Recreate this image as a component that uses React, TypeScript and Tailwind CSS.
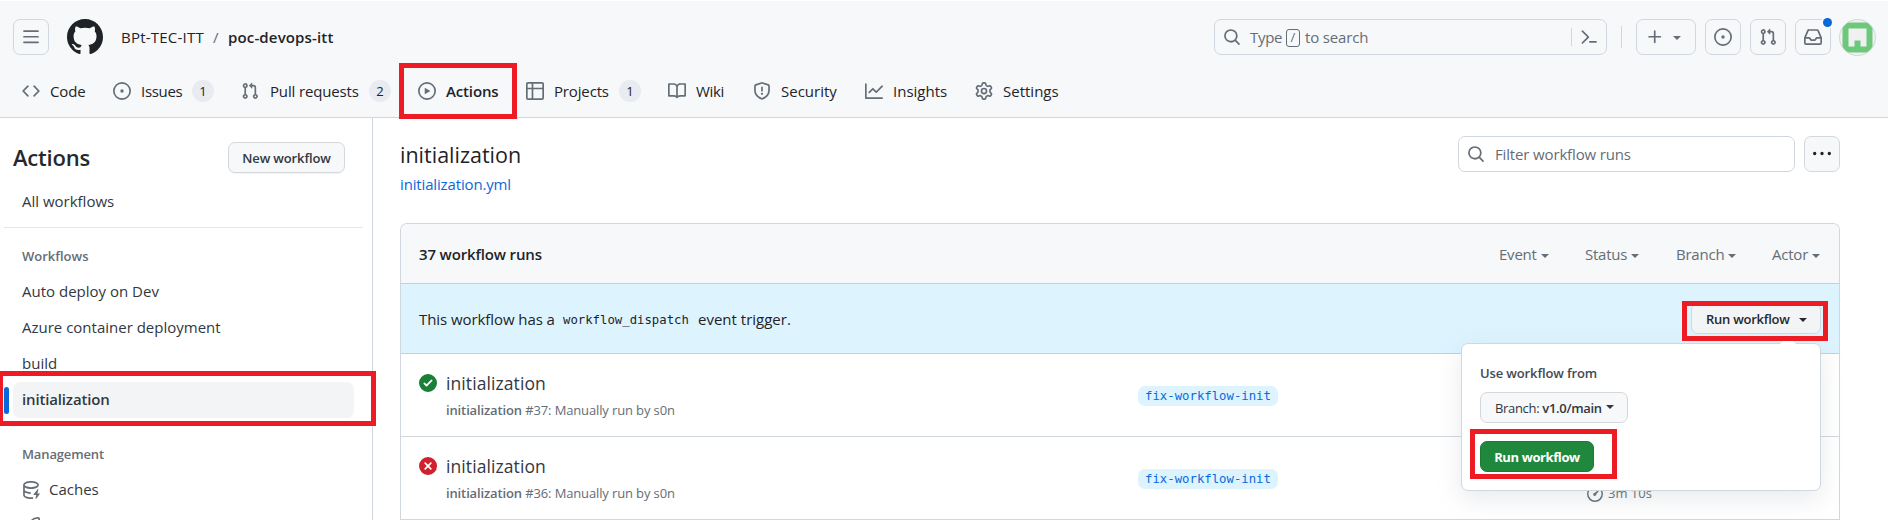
import React from "react";

const ICONS = {
  bars: "M1 2.75A.75.75 0 0 1 1.75 2h12.5a.75.75 0 0 1 0 1.5H1.75A.75.75 0 0 1 1 2.75Zm0 5A.75.75 0 0 1 1.75 7h12.5a.75.75 0 0 1 0 1.5H1.75A.75.75 0 0 1 1 7.75ZM1.75 12h12.5a.75.75 0 0 1 0 1.5H1.75a.75.75 0 0 1 0-1.5Z",
  github:
    "M8 0c4.42 0 8 3.58 8 8a8.013 8.013 0 0 1-5.45 7.59c-.4.08-.55-.17-.55-.38 0-.27.01-1.13.01-2.2 0-.75-.25-1.23-.54-1.48 1.78-.2 3.65-.88 3.65-3.95 0-.88-.31-1.59-.82-2.15.08-.2.36-1.02-.08-2.12 0 0-.67-.22-2.2.82-.64-.18-1.32-.27-2-.27-.68 0-1.36.09-2 .27-1.53-1.03-2.2-.82-2.2-.82-.44 1.1-.16 1.92-.08 2.12-.51.56-.82 1.28-.82 2.15 0 3.06 1.86 3.75 3.64 3.95-.23.2-.44.55-.51 1.07-.46.21-1.61.55-2.33-.66-.15-.24-.6-.83-1.23-.82-.67.01-.27.38.01.53.34.19.73.9.82 1.13.16.45.68 1.31 2.69.94 0 .67.01 1.3.01 1.49 0 .21-.15.45-.55.38A7.995 7.995 0 0 1 0 8c0-4.42 3.58-8 8-8Z",
  code: "m11.28 3.22 4.25 4.25a.75.75 0 0 1 0 1.06l-4.25 4.25a.749.749 0 0 1-1.275-.326.749.749 0 0 1 .215-.734L13.94 8l-3.72-3.72a.749.749 0 0 1 .326-1.275.749.749 0 0 1 .734.215Zm-6.56 0a.751.751 0 0 1 1.042.018.751.751 0 0 1 .018 1.042L2.06 8l3.72 3.72a.749.749 0 0 1-.326 1.275.749.749 0 0 1-.734-.215L.47 8.53a.75.75 0 0 1 0-1.06Z",
  issue:
    "M8 9.5a1.5 1.5 0 1 0 0-3 1.5 1.5 0 0 0 0 3ZM8 0a8 8 0 1 1 0 16A8 8 0 0 1 8 0ZM1.5 8a6.5 6.5 0 1 0 13 0 6.5 6.5 0 0 0-13 0Z",
  pull: "M1.5 3.25a2.25 2.25 0 1 1 3 2.122v5.256a2.251 2.251 0 1 1-1.5 0V5.372A2.25 2.25 0 0 1 1.5 3.25Zm5.677-.177L9.573.677A.25.25 0 0 1 10 .854V2.5h1A2.5 2.5 0 0 1 13.5 5v5.628a2.251 2.251 0 1 1-1.5 0V5a1 1 0 0 0-1-1h-1v1.646a.25.25 0 0 1-.427.177L7.177 3.427a.25.25 0 0 1 0-.354ZM3.75 2.5a.75.75 0 1 0 0 1.5.75.75 0 0 0 0-1.5Zm0 9.5a.75.75 0 1 0 0 1.5.75.75 0 0 0 0-1.5Zm8.25.75a.75.75 0 1 0 1.5 0 .75.75 0 0 0-1.5 0Z",
  play: "M8 0a8 8 0 1 1 0 16A8 8 0 0 1 8 0ZM1.5 8a6.5 6.5 0 1 0 13 0 6.5 6.5 0 0 0-13 0Zm4.879-2.773 4.264 2.559a.25.25 0 0 1 0 .428l-4.264 2.559A.25.25 0 0 1 6 10.559V5.442a.25.25 0 0 1 .379-.215Z",
  table:
    "M0 1.75C0 .784.784 0 1.75 0h12.5C15.216 0 16 .784 16 1.75v12.5A1.75 1.75 0 0 1 14.25 16H1.75A1.75 1.75 0 0 1 0 14.25ZM6.5 6.5v8h7.75a.25.25 0 0 0 .25-.25V6.5Zm8-1.5V1.75a.25.25 0 0 0-.25-.25H6.5V5Zm-13 1.5v7.75c0 .138.112.25.25.25H5v-8ZM5 5V1.5H1.75a.25.25 0 0 0-.25.25V5Z",
  book: "M0 1.75A.75.75 0 0 1 .75 1h4.253c1.227 0 2.317.59 3 1.501A3.743 3.743 0 0 1 11.006 1h4.245a.75.75 0 0 1 .75.75v10.5a.75.75 0 0 1-.75.75h-4.507a2.25 2.25 0 0 0-1.591.659l-.622.621a.75.75 0 0 1-1.06 0l-.622-.621A2.25 2.25 0 0 0 5.258 13H.75a.75.75 0 0 1-.75-.75Zm7.251 10.324.004-5.073-.002-2.253A2.25 2.25 0 0 0 5.003 2.5H1.5v9h3.757a3.75 3.75 0 0 1 1.994.574ZM8.755 4.75l-.004 7.322a3.752 3.752 0 0 1 1.992-.572H14.5v-9h-3.495a2.25 2.25 0 0 0-2.25 2.25Z",
  shield:
    "M7.467.133a1.748 1.748 0 0 1 1.066 0l5.25 1.68A1.75 1.75 0 0 1 15 3.48V7c0 1.566-.32 3.182-1.303 4.682-.983 1.498-2.585 2.813-5.032 3.855a1.697 1.697 0 0 1-1.33 0c-2.447-1.042-4.049-2.357-5.032-3.855C1.32 10.182 1 8.566 1 7V3.48a1.75 1.75 0 0 1 1.217-1.667Zm.61 1.429a.25.25 0 0 0-.153 0l-5.25 1.68a.25.25 0 0 0-.174.238V7c0 1.358.275 2.666 1.057 3.86.784 1.194 2.121 2.34 4.366 3.297a.196.196 0 0 0 .154 0c2.245-.956 3.582-2.104 4.366-3.298C13.225 9.666 13.5 8.36 13.5 7V3.48a.251.251 0 0 0-.174-.237l-5.25-1.68ZM8.75 4.75v3a.75.75 0 0 1-1.5 0v-3a.75.75 0 0 1 1.5 0ZM9 10.5a1 1 0 1 1-2 0 1 1 0 0 1 2 0Z",
  graph:
    "M1.5 1.75V13.5h13.75a.75.75 0 0 1 0 1.5H.75a.75.75 0 0 1-.75-.75V1.75a.75.75 0 0 1 1.5 0Zm14.28 2.53-5.25 5.25a.75.75 0 0 1-1.06 0L7 7.06 4.28 9.78a.751.751 0 0 1-1.042-.018.751.751 0 0 1-.018-1.042l3.25-3.25a.75.75 0 0 1 1.06 0L10 7.94l4.72-4.72a.751.751 0 0 1 1.042.018.751.751 0 0 1 .018 1.042Z",
  gear: "M8 0a8.2 8.2 0 0 1 .701.031C9.444.095 9.99.645 10.16 1.29l.288 1.107c.018.066.079.158.212.224.231.114.454.243.668.386.123.082.233.09.299.071l1.103-.303c.644-.176 1.392.021 1.82.63.27.385.506.792.704 1.218.315.675.111 1.422-.364 1.891l-.814.806c-.049.048-.098.147-.088.294.016.257.016.515 0 .772-.01.147.038.246.088.294l.814.806c.475.469.679 1.216.364 1.891a7.977 7.977 0 0 1-.704 1.217c-.428.61-1.176.807-1.82.63l-1.102-.302c-.067-.019-.177-.011-.3.071a5.909 5.909 0 0 1-.668.386c-.133.066-.194.158-.211.224l-.29 1.106c-.168.646-.715 1.196-1.458 1.26a8.006 8.006 0 0 1-1.402 0c-.743-.064-1.289-.614-1.458-1.26l-.289-1.106c-.018-.066-.079-.158-.212-.224a5.738 5.738 0 0 1-.668-.386c-.123-.082-.233-.09-.299-.071l-1.103.303c-.644.176-1.392-.021-1.82-.63a8.12 8.12 0 0 1-.704-1.218c-.315-.675-.111-1.422.363-1.891l.815-.806c.05-.048.098-.147.088-.294a6.214 6.214 0 0 1 0-.772c.01-.147-.038-.246-.088-.294l-.815-.806C.635 6.045.431 5.298.746 4.623a7.92 7.92 0 0 1 .704-1.217c.428-.61 1.176-.807 1.82-.63l1.102.302c.067.019.177.011.3-.071.214-.143.437-.272.668-.386.133-.066.194-.158.211-.224l.29-1.106C6.009.645 6.556.095 7.299.03 7.53.01 7.764 0 8 0Zm-.571 1.525c-.036.003-.108.036-.137.146l-.289 1.105c-.147.561-.549.967-.998 1.189-.173.086-.34.183-.5.29-.417.278-.97.423-1.529.27l-1.103-.303c-.109-.03-.175.016-.195.045-.22.312-.412.644-.573.99-.014.031-.021.11.059.19l.815.806c.411.406.562.957.53 1.456a4.709 4.709 0 0 0 0 .582c.032.499-.119 1.05-.53 1.456l-.815.806c-.081.08-.073.159-.059.19.162.346.353.677.573.989.02.03.085.076.195.046l1.102-.303c.56-.153 1.113-.008 1.53.27.161.107.328.204.501.29.447.222.85.629.997 1.189l.289 1.105c.029.109.101.143.137.146a6.6 6.6 0 0 0 1.142 0c.036-.003.108-.036.137-.146l.289-1.105c.147-.561.549-.967.998-1.189.173-.086.34-.183.5-.29.417-.278.97-.423 1.529-.27l1.103.303c.109.029.175-.016.195-.045.22-.313.411-.644.573-.99.014-.031.021-.11-.059-.19l-.815-.806c-.411-.406-.562-.957-.53-1.456a4.709 4.709 0 0 0 0-.582c-.032-.499.119-1.05.53-1.456l.815-.806c.081-.08.073-.159.059-.19a6.464 6.464 0 0 0-.573-.989c-.02-.03-.085-.076-.195-.046l-1.102.303c-.56.153-1.113.008-1.53-.27a4.44 4.44 0 0 0-.501-.29c-.447-.222-.85-.629-.997-1.189l-.289-1.105c-.029-.11-.101-.143-.137-.146a6.6 6.6 0 0 0-1.142 0ZM11 8a3 3 0 1 1-6 0 3 3 0 0 1 6 0ZM9.5 8a1.5 1.5 0 1 0-3.001.001A1.5 1.5 0 0 0 9.5 8Z",
  search:
    "M10.68 11.74a6 6 0 0 1-7.922-8.982 6 6 0 0 1 8.982 7.922l3.04 3.04a.749.749 0 0 1-.326 1.275.749.749 0 0 1-.734-.215ZM11.5 7a4.499 4.499 0 1 0-8.997 0A4.499 4.499 0 0 0 11.5 7Z",
  plus: "M7.75 2a.75.75 0 0 1 .75.75V7h4.25a.75.75 0 0 1 0 1.5H8.5v4.25a.75.75 0 0 1-1.5 0V8.5H2.75a.75.75 0 0 1 0-1.5H7V2.75A.75.75 0 0 1 7.75 2Z",
  inbox:
    "M2.8 2.06A1.75 1.75 0 0 1 4.41 1h7.18c.7 0 1.333.417 1.61 1.06l2.74 6.395c.04.093.06.194.06.295v4.5A1.75 1.75 0 0 1 14.25 15H1.75A1.75 1.75 0 0 1 0 13.25v-4.5c0-.101.02-.202.06-.295Zm1.61.44a.25.25 0 0 0-.23.152L1.887 8H4.75a.75.75 0 0 1 .6.3L6.625 10h2.75l1.275-1.7a.75.75 0 0 1 .6-.3h2.863L11.82 2.652a.25.25 0 0 0-.23-.152Zm10.09 7h-2.875l-1.275 1.7a.75.75 0 0 1-.6.3h-3.5a.75.75 0 0 1-.6-.3L4.375 9.5H1.5v3.75c0 .138.112.25.25.25h12.5a.25.25 0 0 0 .25-.25Z",
  command:
    "m6.354 8.04-4.773 4.773a.75.75 0 1 0 1.061 1.06L7.945 8.57a.75.75 0 0 0 0-1.06L2.642 2.206a.75.75 0 0 0-1.06 1.061L6.353 8.04ZM8.75 11.5a.75.75 0 0 0 0 1.5h5.5a.75.75 0 0 0 0-1.5h-5.5Z",
  kebab:
    "M8 9a1.5 1.5 0 1 0 0-3 1.5 1.5 0 0 0 0 3ZM1.5 9a1.5 1.5 0 1 0 0-3 1.5 1.5 0 0 0 0 3Zm13 0a1.5 1.5 0 1 0 0-3 1.5 1.5 0 0 0 0 3Z",
  check:
    "M8 16A8 8 0 1 1 8 0a8 8 0 0 1 0 16Zm3.78-9.72a.751.751 0 0 0-.018-1.042.751.751 0 0 0-1.042-.018L6.75 9.19 5.28 7.72a.751.751 0 0 0-1.042.018.751.751 0 0 0-.018 1.042l2 2a.75.75 0 0 0 1.06 0Z",
  fail: "M2.343 13.657A8 8 0 1 1 13.658 2.343 8 8 0 0 1 2.343 13.657ZM6.03 4.97a.751.751 0 0 0-1.042.018.751.751 0 0 0-.018 1.042L6.94 8 4.97 9.97a.749.749 0 0 0 .326 1.275.749.749 0 0 0 .734-.215L8 9.06l1.97 1.97a.749.749 0 0 0 1.275-.326.749.749 0 0 0-.215-.734L9.06 8l1.97-1.97a.749.749 0 0 0-.326-1.275.749.749 0 0 0-.734.215L8 6.94Z",
  cache:
    "M2.5 5.724V8c0 .248.238.7 1.169 1.159.874.43 2.144.745 3.62.822a.75.75 0 1 1-.078 1.498c-1.622-.085-3.102-.432-4.204-.975a5.565 5.565 0 0 1-.507-.28V12.5c0 .133.058.318.282.551.227.237.591.483 1.101.707 1.015.447 2.47.742 4.117.742.406 0 .802-.018 1.183-.052a.751.751 0 1 1 .134 1.494C8.89 15.98 8.45 16 8 16c-1.805 0-3.475-.32-4.721-.869-.623-.274-1.173-.619-1.579-1.041-.408-.425-.7-.964-.7-1.59v-9c0-.626.292-1.165.7-1.591.406-.42.956-.766 1.579-1.04C4.525.32 6.195 0 8 0c1.806 0 3.476.32 4.721.869.623.274 1.173.619 1.579 1.041.408.425.7.964.7 1.59 0 .626-.292 1.165-.7 1.591-.406.42-.956.766-1.578 1.04C11.475 6.68 9.805 7 8 7c-1.805 0-3.475-.32-4.721-.869a6.15 6.15 0 0 1-.779-.407Zm0-2.224c0 .133.058.318.282.551.227.237.591.483 1.101.707C4.898 5.205 6.353 5.5 8 5.5c1.646 0 3.101-.295 4.118-.742.508-.224.873-.471 1.1-.708.224-.232.282-.417.282-.55 0-.133-.058-.318-.282-.551-.227-.237-.591-.483-1.101-.707C11.102 1.795 9.647 1.5 8 1.5c-1.646 0-3.101.295-4.118.742-.508.224-.873.471-1.1.708-.224.232-.282.417-.282.55ZM14.49 7.582a.375.375 0 0 0-.66-.313l-3.625 4.625a.375.375 0 0 0 .295.606h2.127l-.619 2.922a.375.375 0 0 0 .666.304l3.125-4.125A.375.375 0 0 0 15.5 11h-1.778l.769-3.418Z",
  rocket:
    "M14.064 0h.186C15.216 0 16 .784 16 1.75v.186a8.752 8.752 0 0 1-2.564 6.186l-.458.459c-.314.314-.641.616-.979.904v3.207c0 .608-.315 1.172-.833 1.49l-2.774 1.707a.749.749 0 0 1-1.11-.418l-.954-3.102a1.214 1.214 0 0 1-.145-.125L3.754 9.816a1.218 1.218 0 0 1-.124-.145L.528 8.717a.749.749 0 0 1-.418-1.11l1.71-2.774A1.748 1.748 0 0 1 3.31 4h3.204c.288-.338.59-.665.904-.979l.459-.458A8.749 8.749 0 0 1 14.064 0ZM8.938 3.623l-.46.458c-.76.76-1.437 1.598-2.02 2.5l-1.5 2.317 2.143 2.143 2.317-1.5c.902-.583 1.74-1.26 2.499-2.02l.459-.458a7.25 7.25 0 0 0 2.123-5.127V1.75a.25.25 0 0 0-.25-.25h-.186a7.249 7.249 0 0 0-5.125 2.123Z",
  meter:
    "M8 0a8 8 0 1 1 0 16A8 8 0 0 1 8 0ZM1.5 8a6.5 6.5 0 1 0 13 0 6.5 6.5 0 0 0-13 0ZM10.6 4.4l1.1 1.1-2.3 2.6a1.6 1.6 0 1 1-1.4-1.4Z",
};

type IconName = keyof typeof ICONS;

function Icon({ name, className = "size-[18px]" }: { name: IconName; className?: string }) {
  return (
    <svg viewBox="0 0 16 16" fill="currentColor" className={`shrink-0 ${className}`} aria-hidden="true">
      <path fillRule="evenodd" d={ICONS[name]} />
    </svg>
  );
}

function Caret({ className = "" }: { className?: string }) {
  return (
    <span
      className={`inline-block size-0 shrink-0 border-x-[4px] border-t-[4px] border-x-transparent border-t-current ${className}`}
    />
  );
}

type NavItem = { icon: IconName; label: string; width: string; text: string; count?: number };

const NAV: NavItem[] = [
  { icon: "code", label: "Code", width: "w-[91px]", text: "tracking-[-0.01em]" },
  { icon: "issue", label: "Issues", width: "w-[128px]", text: "w-[41px] tracking-[-0.02em]", count: 1 },
  { icon: "pull", label: "Pull requests", width: "w-[177px]", text: "w-[90px] pl-px tracking-[-0.01em]", count: 2 },
  { icon: "play", label: "Actions", width: "w-[108px]", text: "font-semibold tracking-[-0.01em]" },
  { icon: "table", label: "Projects", width: "w-[142px]", text: "w-[55px] tracking-[-0.01em]", count: 1 },
  { icon: "book", label: "Wiki", width: "w-[85px]", text: "tracking-[-0.02em]" },
  { icon: "shield", label: "Security", width: "w-[112px]", text: "" },
  { icon: "graph", label: "Insights", width: "w-[110px]", text: "" },
  { icon: "gear", label: "Settings", width: "w-[110px]", text: "" },
];

const HEADER_BUTTON =
  "flex h-9 items-center justify-center rounded-[7px] border border-[#d0d7de] bg-[#f6f8fa] text-[#656d76]";

function Header() {
  return (
    <header className="mt-px h-[117px] border-b border-[#d0d7de] bg-[#f6f8fa]">
      <div className="flex h-[72px] items-center pl-[13px] pr-3">
        <button className={`${HEADER_BUTTON} w-9`}>
          <Icon name="bars" />
        </button>
        <Icon name="github" className="ml-[18px] size-9 text-[#1f2328]" />
        <div className="ml-[18px] flex items-center">
          <span className="w-[92px] tracking-[0.015em]">BPt-TEC-ITT</span>
          <span className="w-[15px] text-[#656d76]">/</span>
          <span className="font-semibold tracking-[0.01em]">poc-devops-itt</span>
        </div>
        <div className="ml-auto flex items-center">
          <div className="flex h-9 w-[393px] items-center rounded-[7px] border border-[#d0d7de] pl-[8px] text-[#656d76]">
            <Icon name="search" />
            <span className="ml-[9px] w-[36px] tracking-[-0.02em]">Type</span>
            <span className="mt-px flex h-[18px] w-[14px] items-center justify-center rounded-[3px] border border-[#656d76] text-[13px]">
              /
            </span>
            <span className="ml-[5px] tracking-[-0.01em]">to search</span>
            <span className="ml-auto mr-[8px] h-[18px] w-px bg-[#d0d7de]" />
            <Icon name="command" className="mr-[8px] size-[18px]" />
          </div>
          <span className="ml-[14px] mr-[14px] h-[22px] w-px bg-[#d0d7de]" />
          <button className={`${HEADER_BUTTON} w-[60px] gap-[9px] pr-[6px]`}>
            <Icon name="plus" />
            <Caret className="mt-[2px]" />
          </button>
          <button className={`${HEADER_BUTTON} ml-[9px] w-9`}>
            <Icon name="issue" />
          </button>
          <button className={`${HEADER_BUTTON} ml-[9px] w-9`}>
            <Icon name="pull" />
          </button>
          <button className={`${HEADER_BUTTON} relative ml-[9px] w-9`}>
            <Icon name="inbox" />
            <span className="absolute -right-[2px] -top-[2px] size-[9px] rounded-full bg-[#0969da] ring-2 ring-[#f6f8fa]" />
          </button>
          <svg viewBox="0 0 37 37" className="ml-[8px] size-[37px]" aria-hidden="true">
            <clipPath id="avatar">
              <circle cx="18.5" cy="18.5" r="17.6" />
            </clipPath>
            <circle cx="18.5" cy="18.5" r="18" fill="#f0f0f0" stroke="#d4d7da" />
            <path
              clipPath="url(#avatar)"
              fill="#6cc97c"
              fillRule="evenodd"
              d="M3.5 3.5h30v30h-30ZM9.5 9.5v18h6v-6h6v6h6v-18Z"
            />
          </svg>
        </div>
      </div>
      <nav className="flex h-[36px] items-center pl-[22px]">
        {NAV.map((item) => (
          <a key={item.label} className={`flex items-center ${item.width}`}>
            <Icon name={item.icon} className="size-[18px] text-[#656d76]" />
            <span className={`ml-[10px] whitespace-nowrap pt-px ${item.text}`}>{item.label}</span>
            {item.count !== undefined && (
              <span className="ml-[10px] flex h-[22px] w-[22px] items-center justify-center rounded-full bg-[#e8ebef] pt-px text-[13px] font-medium">
                {item.count}
              </span>
            )}
          </a>
        ))}
      </nav>
    </header>
  );
}

function SideLink({ children, icon }: { children: React.ReactNode; icon?: IconName }) {
  return (
    <li className="flex h-9 items-center pl-[22px]">
      {icon && <Icon name={icon} className="mr-[9px] size-[18px] text-[#656d76]" />}
      <span className="pb-[2px] text-[#32383f]">{children}</span>
    </li>
  );
}

function Sidebar() {
  return (
    <aside className="h-[402px] w-[373px] shrink-0 border-r border-[#d0d7de]">
      <div className="flex items-center justify-between pl-[13px] pr-[27px] pt-6">
        <h2 className="text-[22px] font-semibold leading-[31px] tracking-[-0.01em] text-[#25292e]">Actions</h2>
        <button className="h-[31px] w-[117px] rounded-[7px] border border-[#d5d8da] bg-[#f6f8fa] pt-[2px] text-[13px] font-semibold tracking-[-0.01em] text-[#32383f] shadow-[0_1px_0_rgba(31,35,40,0.04)]">
          New workflow
        </button>
      </div>
      <ul className="pt-[11px]">
        <SideLink>All workflows</SideLink>
      </ul>
      <div className="ml-1 mr-[9px] mt-[7px] h-px bg-[#e4e7ea]" />
      <h3 className="mt-[17px] pl-[22px] text-[13px] font-semibold leading-[22px] text-[#656d76]">Workflows</h3>
      <ul className="mt-[7px]">
        <SideLink>Auto deploy on Dev</SideLink>
        <SideLink>Azure container deployment</SideLink>
        <SideLink>build</SideLink>
        <li className="flex h-9 items-center pl-1">
          <span className="h-[27px] w-[5px] rounded-[3px] bg-[#0969da]" />
          <span className="ml-1 flex h-9 w-[341px] items-center rounded-[7px] bg-[#f3f4f6] pb-[2px] pl-[9px] font-semibold tracking-[-0.01em] text-[#32383f]">
            initialization
          </span>
        </li>
      </ul>
      <h3 className="mt-[25px] pl-[22px] text-[13px] font-semibold leading-[22px] tracking-[-0.01em] text-[#656d76]">
        Management
      </h3>
      <ul className="mt-[7px]">
        <SideLink icon="cache">Caches</SideLink>
        <SideLink icon="rocket">Deployments</SideLink>
      </ul>
    </aside>
  );
}

function Run({ ok, id, last }: { ok: boolean; id: number; last?: boolean }) {
  return (
    <div className="flex h-[83px] border-b border-[#d0d7de] pl-[18px]">
      <Icon name={ok ? "check" : "fail"} className={`mt-5 size-[18px] ${ok ? "text-[#1a7f37]" : "text-[#cf222e]"}`} />
      <div className="ml-[9px] w-[692px] pt-[16px]">
        <div className="text-[17.5px] font-medium leading-[26px] tracking-[0.005em] text-[#32383f]">initialization</div>
        <div className="mt-[4px] text-[13px] leading-[20px] tracking-[-0.01em] text-[#656d76]">
          <span className="font-semibold">initialization</span> #{id}: Manually run by s0n
        </div>
      </div>
      <div className="w-[449px] pt-8">
        <span className="flex h-5 w-[140px] items-center justify-center rounded-[7px] bg-[#ddf4ff] font-['DejaVu_Sans_Mono',monospace] text-[12.3px] text-[#0969da]">
          fix-workflow-init
        </span>
      </div>
      {last && (
        <div className="mb-[15px] flex h-5 items-center self-end text-[13px] text-[#656d76]">
          <Icon name="meter" className="mr-[5px] size-4" />
          3m 10s
        </div>
      )}
    </div>
  );
}

function RunPopover() {
  return (
    <div className="absolute left-[1461px] top-[343px] h-[148px] w-[360px] rounded-[7px] border border-[#d0d7de] bg-white px-[18px] pt-[19px] shadow-[0_8px_24px_rgba(140,149,159,0.2)]">
      <span className="absolute -top-[8px] right-[24px] border-x-[8px] border-b-[8px] border-x-transparent border-b-white" />
      <div className="text-[13px] font-semibold leading-[20px] tracking-[-0.01em] text-[#424a53]">
        Use workflow from
      </div>
      <button className="mt-[9px] flex h-[31px] w-[148px] items-center rounded-[7px] border border-[#d5d8da] bg-[#f6f8fa] pl-[14px] pt-[2px] text-[13px] tracking-[-0.025em] text-[#32383f]">
        Branch:&nbsp;<span className="font-semibold">v1.0/main</span>
        <Caret className="mb-[4px] ml-[4px]" />
      </button>
      <button className="mt-[18px] h-[31px] w-[114px] rounded-[7px] border border-[#1f7a39] bg-[#1f883d] pt-[2px] text-[13px] font-bold tracking-[-0.03em] text-white">
        Run workflow
      </button>
    </div>
  );
}

const FILTERS = [
  { label: "Event", width: "w-[86px]" },
  { label: "Status", width: "w-[91px]" },
  { label: "Branch", width: "w-[96px]" },
  { label: "Actor", width: "w-[67px]" },
];

function Main() {
  return (
    <main className="w-[1467px] pl-[27px]">
      <div className="flex h-[105px] items-start justify-between pt-[18px]">
        <div>
          <h1 className="mt-[3px] text-[21.5px] leading-[32px]">initialization</h1>
          <a className="block leading-[26px] tracking-[-0.01em] text-[#0969da]">initialization.yml</a>
        </div>
        <div className="flex gap-[9px]">
          <div className="flex h-9 w-[337px] items-center rounded-[7px] border border-[#d0d7de] pl-[8px] text-[#656d76]">
            <Icon name="search" />
            <span className="ml-[10px] pt-px tracking-[-0.01em]">Filter workflow runs</span>
          </div>
          <button className="flex size-9 items-center justify-center rounded-[7px] border border-[#d5d8da] bg-[#f6f8fa] text-[#1f2328]">
            <Icon name="kebab" />
          </button>
        </div>
      </div>
      <section className="rounded-t-[7px] border border-b-0 border-[#d0d7de]">
        <div className="flex h-[59px] items-center justify-between rounded-t-[6px] bg-[#f6f8fa] pl-[18px] pt-[2px]">
          <span className="font-semibold tracking-[-0.01em]">37 workflow runs</span>
          <div className="flex tracking-[-0.015em] text-[#656d76]">
            {FILTERS.map((f) => (
              <span key={f.label} className={`flex items-center ${f.width}`}>
                {f.label}
                <Caret className="ml-[4px] mt-[2px]" />
              </span>
            ))}
          </div>
        </div>
        <div className="flex h-[71px] items-center justify-between border-y border-[#a6d8fb] bg-[#ddf4ff] pl-[18px] pr-[18px]">
          <div className="flex items-center pt-[2px]">
            <span className="w-[144px] whitespace-nowrap tracking-[-0.005em]">This workflow has a</span>
            <span className="w-[135px] pt-[2px] font-['DejaVu_Sans_Mono',monospace] text-[12.3px]">
              workflow_dispatch
            </span>
            <span>event trigger.</span>
          </div>
          <button className="flex h-[31px] w-[130px] items-center rounded-[7px] border border-[#d5d8da] bg-[#f3f4f6] pl-[14px] pt-[3px] text-[13px] font-semibold tracking-[-0.02em] text-[#25292e]">
            Run workflow
            <Caret className="ml-[9px]" />
          </button>
        </div>
        <Run ok id={37} />
        <Run ok={false} id={36} last />
      </section>
    </main>
  );
}

export default function App() {
  return (
    <div className="relative h-[520px] w-[1888px] overflow-hidden bg-white font-['Open_Sans','Noto_Sans',sans-serif] text-[15px] text-[#1f2328]">
      <Header />
      <div className="flex">
        <Sidebar />
        <Main />
      </div>
      <RunPopover />
      <div className="absolute left-[399px] top-[63px] h-[56px] w-[118px] border-[5px] border-[#ed1c24]" />
      <div className="absolute -left-[2px] top-[371px] h-[55px] w-[378px] border-[5px] border-[#ed1c24]" />
      <div className="absolute left-[1682px] top-[301px] h-[40px] w-[146px] border-[5px] border-[#ed1c24]" />
      <div className="absolute left-[1470px] top-[429px] h-[50px] w-[147px] border-[5px] border-[#ed1c24]" />
    </div>
  );
}
